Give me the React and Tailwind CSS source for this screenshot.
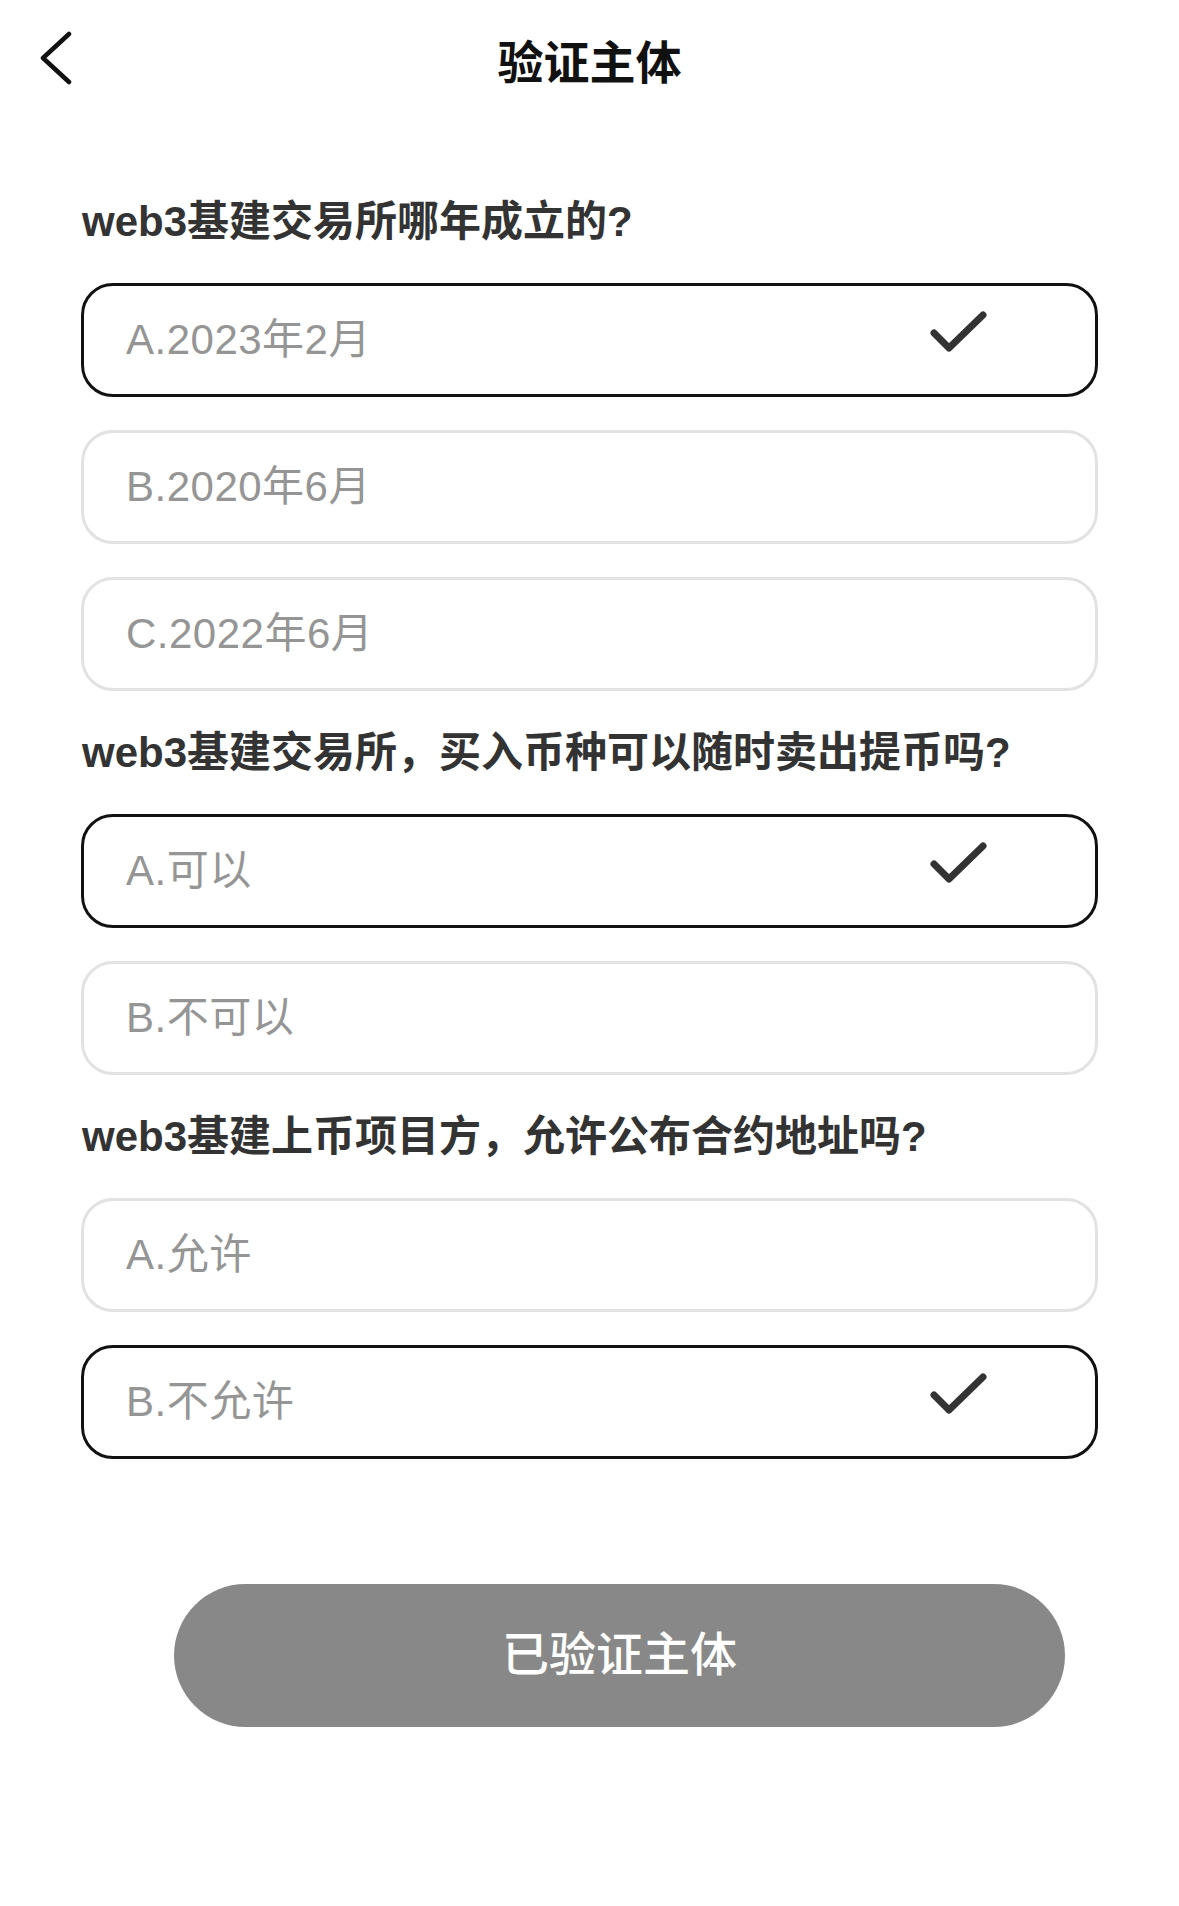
import React from 'react';

const questions = [
  {
    title: 'web3基建交易所哪年成立的?',
    options: ['A.2023年2月', 'B.2020年6月', 'C.2022年6月'],
    picked: 0,
  },
  {
    title: 'web3基建交易所，买入币种可以随时卖出提币吗?',
    options: ['A.可以', 'B.不可以'],
    picked: 0,
  },
  {
    title: 'web3基建上币项目方，允许公布合约地址吗?',
    options: ['A.允许', 'B.不允许'],
    picked: 1,
  },
];

const Check = () => (
  <svg width="60" height="60" viewBox="0 0 60 60" fill="none">
    <path d="M7 23 L22 38 L56 5" stroke="#333333" strokeWidth="7" strokeLinecap="round" strokeLinejoin="round" />
  </svg>
);

const Option = ({ label, active }) => (
  <div
    className={`h-[114px] rounded-[32px] border-[3px] flex items-center justify-between pl-[42px] pr-[108px] ${
      active ? 'border-[#111111]' : 'border-[#e2e2e2]'
    }`}
  >
    <span className="text-[42px] leading-[50px] tracking-[0.5px] text-[#959595]">{label}</span>
    {active && <Check />}
  </div>
);

export default function App() {
  return (
    <div className="w-[1179px] min-h-[1906px] bg-white font-['Liberation_Sans','Noto_Sans_CJK_SC',sans-serif]">
      <div className="grid grid-cols-[1fr_auto_1fr] h-[126px] items-start">
        <div className="pl-[40px] pt-[30px]">
          <svg width="32" height="56" viewBox="0 0 32 56" fill="none">
            <path d="M29 4 L3 28 L29 52" stroke="#111111" strokeWidth="4.5" strokeLinecap="round" strokeLinejoin="round" />
          </svg>
        </div>
        <h1 className="mt-[35px] text-[46px] leading-[56px] font-bold text-[#111111]">验证主体</h1>
        <div />
      </div>

      <div className="px-[81px] pt-[71px]">
        {questions.map((q, qi) => (
          <div key={qi} className={qi > 0 ? 'mt-[37px]' : ''}>
            <p className="text-[42px] leading-[50px] font-semibold text-[#333333] mb-[36px] pl-[1px]">{q.title}</p>
            <div className="flex flex-col gap-[33px]">
              {q.options.map((o, oi) => (
                <Option key={oi} label={o} active={oi === q.picked} />
              ))}
            </div>
          </div>
        ))}
      </div>

      <div className="mt-[125px] ml-[174px] w-[891px] h-[143px] rounded-full bg-[#888888] flex items-center justify-center">
        <span className="text-[47px] font-medium text-white">已验证主体</span>
      </div>
    </div>
  );
}
